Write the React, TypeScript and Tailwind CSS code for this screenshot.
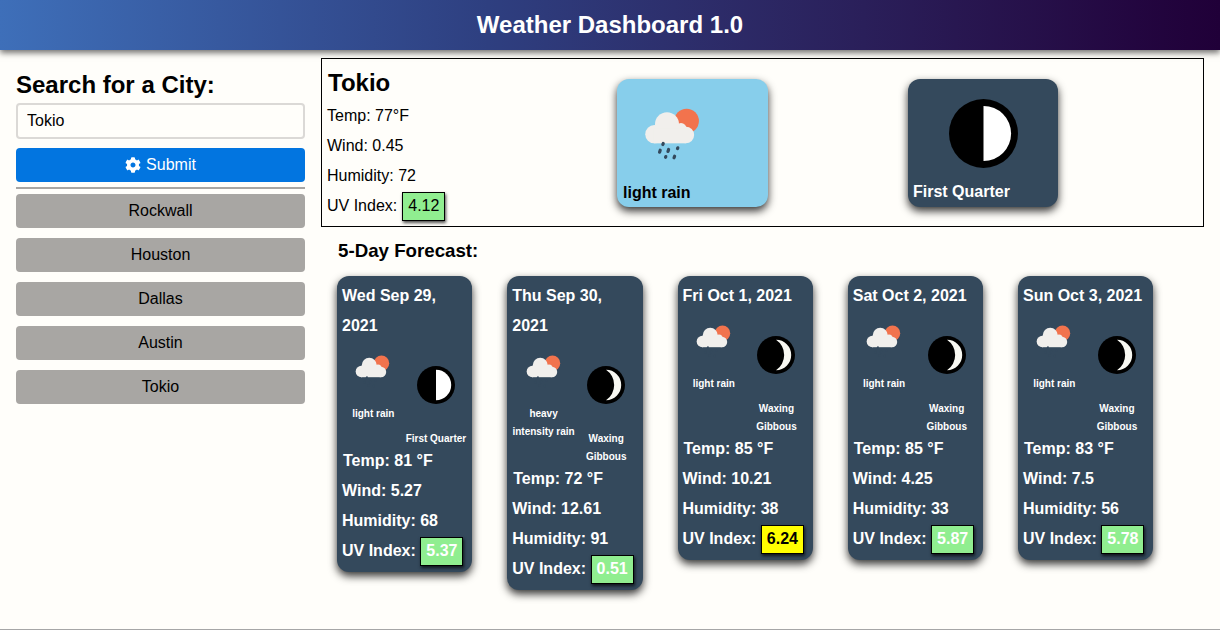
import React from "react";
import { FaCog } from "react-icons/fa";

const WeatherIcon: React.FC<{ className: string }> = ({ className }) => (
  <svg viewBox="0 0 100 100" className={className}>
    <circle cx="67" cy="32.5" r="15.4" fill="#f2734d" />
    <g fill="#f1efec">
      <circle cx="26.7" cy="49" r="11.4" />
      <circle cx="42.5" cy="36.5" r="15" />
      <circle cx="60" cy="42" r="7" />
      <circle cx="66" cy="50" r="10.4" />
      <rect x="26" y="42" width="40" height="18.4" />
    </g>
    <g stroke="#34495c" strokeWidth="4" strokeLinecap="round">
      <path d="M37.8 60.5 L37.300 62" />
      <path d="M34 69 L33.200 71.500" />
      <path d="M44.5 68 L43.700 70.500" />
      <path d="M56 66 L55.600 67" />
      <path d="M41 77 L40.700 77.800" />
      <path d="M52 76.500 L51.300 78.500" />
    </g>
  </svg>
);

const Moon: React.FC<{ phase: string; className: string }> = ({ phase, className }) => (
  <svg viewBox="0 0 100 100" className={className}>
    <circle cx="50" cy="50" r="50" fill="#000" />
    {phase === "First Quarter" ? (
      <path d="M50 10 A40 40 0 0 1 50 90 Z" fill="#fff" />
    ) : (
      <path d="M50 10 A40 40 0 0 1 50 90 A48 48 0 0 0 50 10 Z" fill="#f8f8f2" />
    )}
  </svg>
);

const UvBadge: React.FC<{ value: string; className: string }> = ({ value, className }) => (
  <span
    className={`inline-flex h-[29px] items-center border border-black px-[5px] shadow-[1px_2px_3px_rgba(0,0,0,0.7)] ${className}`}
  >
    {value}
  </span>
);

const forecast = [
  { date: "Wed Sep 29, 2021", weather: "light rain", moon: "First Quarter", temp: "81", wind: "5.27", humidity: "68", uv: "5.37" },
  { date: "Thu Sep 30, 2021", weather: "heavy intensity rain", moon: "Waxing Gibbous", temp: "72", wind: "12.61", humidity: "91", uv: "0.51" },
  { date: "Fri Oct 1, 2021", weather: "light rain", moon: "Waxing Gibbous", temp: "85", wind: "10.21", humidity: "38", uv: "6.24" },
  { date: "Sat Oct 2, 2021", weather: "light rain", moon: "Waxing Gibbous", temp: "85", wind: "4.25", humidity: "33", uv: "5.87" },
  { date: "Sun Oct 3, 2021", weather: "light rain", moon: "Waxing Gibbous", temp: "83", wind: "7.5", humidity: "56", uv: "5.78" },
];

const cities = ["Rockwall", "Houston", "Dallas", "Austin", "Tokio"];

const App: React.FC = () => {
  return (
    <div className="box-border h-[630px] overflow-hidden border-b border-[#a6a6a6] bg-[#fffefa] font-['Liberation_Sans',Arial,sans-serif] text-base text-black">
      <header className="relative flex h-[50px] items-center justify-center bg-gradient-to-r from-[#3e6fb9] via-[#2e3f80] via-40% to-[#200038] text-2xl font-bold text-white shadow-[0_3px_6px_rgba(0,0,0,0.55)]">
        Weather Dashboard 1.0
      </header>

      <div className="flex">
        <aside className="ml-4 mt-[21px] w-[289px]">
          <h2 className="h-8 text-2xl leading-7 font-bold">Search for a City:</h2>
          <input
            className="block h-9 w-full rounded border-2 border-[#dbd9d6] bg-[#fffefa] px-[9px] text-base text-black"
            defaultValue="Tokio"
          />
          <button className="mt-[9px] flex h-[34px] w-full items-center justify-center gap-[5px] rounded bg-[#0275e0] text-white">
            <FaCog className="h-4 w-4" />
            Submit
          </button>
          <hr className="mt-[5px] mb-[5px] border-t-2 border-[#a8a6a3]" />
          <div className="flex flex-col gap-[10px]">
            {cities.map((city) => (
              <button key={city} className="h-[34px] w-full rounded bg-[#a8a6a3] text-black">
                {city}
              </button>
            ))}
          </div>
        </aside>

        <main className="ml-4 mt-2 w-[883px]">
          <section className="box-border flex h-[169px] border border-black pl-[5px]">
            <div className="w-[290px]">
              <h2 className="ml-px mt-[9px] h-[33px] text-2xl leading-[30px] font-bold">Tokio</h2>
              <p className="leading-[30px]">Temp: 77°F</p>
              <p className="leading-[30px]">Wind: 0.45</p>
              <p className="leading-[30px]">Humidity: 72</p>
              <p className="flex h-[30px] items-center gap-[5px]">
                UV Index: <UvBadge value="4.12" className="bg-[#90ee90]" />
              </p>
            </div>
            <div className="mt-5 flex h-32 w-[151px] flex-col items-center rounded-xl bg-[#87ceeb] shadow-[0_4px_8px_rgba(0,0,0,0.8)]">
              <WeatherIcon className="mt-4 h-20 w-20 -translate-x-5" />
              <span className="mt-[6px] w-full pl-[6px] font-bold">light rain</span>
            </div>
            <div className="mt-5 ml-[140px] flex h-32 w-[150px] flex-col items-center rounded-xl bg-[#34495c] text-white shadow-[0_4px_8px_rgba(0,0,0,0.8)]">
              <Moon phase="First Quarter" className="mt-5 h-[69px] w-[69px]" />
              <span className="mt-3 w-full pl-[5px] font-bold">First Quarter</span>
            </div>
          </section>

          <h3 className="ml-[17px] mt-[12px] h-[37px] text-[18.72px] leading-6 font-bold">5-Day Forecast:</h3>

          <div className="ml-4 flex items-start gap-[35px]">
            {forecast.map((day) => (
              <article
                key={day.date}
                className="w-[135.250px] rounded-xl bg-[#34495c] px-[5px] pt-[5px] pb-[6px] font-bold text-white shadow-[0_4px_8px_rgba(0,0,0,0.8)]"
              >
                <div className="leading-[30px]">{day.date}</div>
                <div className="grid grid-cols-2 text-center text-[10px] leading-[18px]">
                  <div className="flex flex-col items-center">
                    <WeatherIcon className="mt-[6px] h-[50px] w-[50px]" />
                    <span className="mt-2">{day.weather}</span>
                  </div>
                  <div className="mb-[-2px] flex flex-col items-center">
                    <Moon phase={day.moon} className="mt-[25px] h-[38px] w-[38px]" />
                    <span className="mt-[26px]">{day.moon}</span>
                  </div>
                </div>
                <div className="ml-px leading-[30px]">Temp: {day.temp} °F</div>
                <div className="leading-[30px]">Wind: {day.wind}</div>
                <div className="leading-[30px]">Humidity: {day.humidity}</div>
                <div className="flex h-[30px] items-center gap-[4.500px]">
                  UV Index:
                  <UvBadge
                    value={day.uv}
                    className={day.uv === "6.24" ? "bg-[#ffff00] text-black" : "bg-[#90ee90] text-white"}
                  />
                </div>
              </article>
            ))}
          </div>
        </main>
      </div>
    </div>
  );
};

export default App;
